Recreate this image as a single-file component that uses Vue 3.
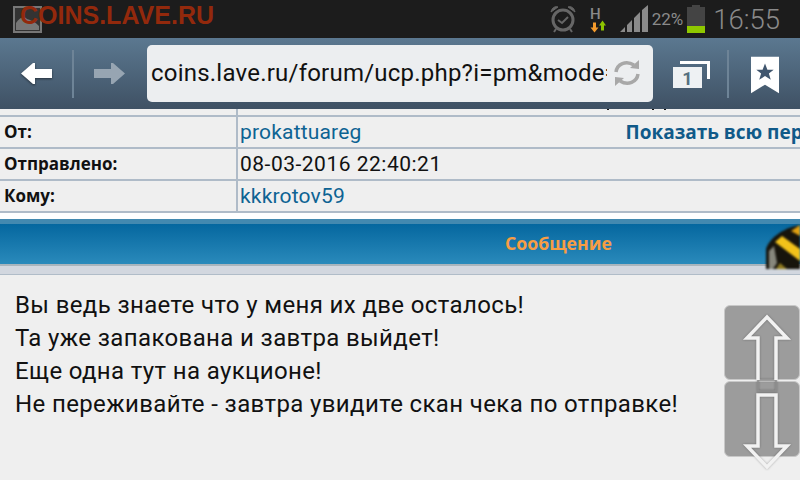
<template>
  <div class="screen">
    <div class="status-bar">
      <svg class="pic-icon" width="29" height="27" viewBox="0 0 29 27">
        <rect x="1" y="1" width="27" height="25" fill="#333" stroke="#777" stroke-width="2" />
        <path d="M3 24V17C7 11 11 10 14 13C18 14 22 16 26 20V24Z" fill="#777" />
      </svg>
      <span class="watermark">COINS.LAVE.RU</span>
      <div class="status-right">
        <svg class="alarm" width="26" height="28" viewBox="0 0 26 28" fill="none" stroke="#666">
          <circle cx="13" cy="15" r="10" stroke-width="3" />
          <path d="M8 15l4 3 6-6" stroke-width="2" />
          <path d="M1 7C2 2 6 1 8 2ZM25 7C24 2 20 1 18 2Z" fill="#666" stroke-width="1" />
          <path d="M6 24l-2 3M20 24l2 3" stroke-width="2" />
        </svg>
        <svg class="net" width="16" height="27" viewBox="0 0 16 27">
          <text x="0" y="12.500" class="net-h">H</text>
          <path d="M3 16.500h3v5h2.500l-4 5-4-5h2.500Z" fill="#f49b2c" />
          <path d="M11 24.500h3v-5h2l-3.500-5-3.500 5h2Z" fill="#8ec400" />
        </svg>
        <svg class="signal" width="29" height="28" viewBox="0 0 29 28" fill="#8a8a8a">
          <path d="M0 27L5 22V27ZM7 20L12 15V27H7ZM14 13L20 7V27H14ZM22 5L28 0V27H22Z" />
        </svg>
        <span class="percent">22%</span>
        <div class="battery">
          <div class="battery-cap"></div>
          <div class="battery-body"><div class="battery-fill"></div></div>
        </div>
        <span class="clock">16:55</span>
      </div>
    </div>

    <div class="toolbar">
      <svg class="nav-back" width="32" height="22" viewBox="0 0 32 22">
        <path d="M0 10.500L12 0H14V6H31V15H14V21H12Z" fill="#fff" />
      </svg>
      <div class="sep"></div>
      <svg class="nav-forward" width="32" height="22" viewBox="0 0 32 22">
        <path d="M31 10.500L19 0H17V6H0V15H17V21H19Z" fill="#97a5b2" />
      </svg>
      <div class="url-box">
        <span class="url-text">coins.lave.ru/forum/ucp.php?i=pm&amp;mode=view</span>
        <svg class="reload" width="28" height="28" viewBox="0 0 28 28" fill="none" stroke="#a8a8a8" stroke-width="3.500">
          <path d="M3 13C4 5 13 1 21 6" />
          <path d="M25 15C24 23 15 27 7 22" />
          <path d="M17 9L26 10L26 1Z" fill="#a8a8a8" stroke="none" />
          <path d="M11 19L2 18L2 27Z" fill="#a8a8a8" stroke="none" />
        </svg>
      </div>
      <div class="tabs">
        <div class="tab-back"></div>
        <div class="tab-front">1</div>
      </div>
      <div class="sep sep-right"></div>
      <svg class="bookmark" width="28" height="38" viewBox="0 0 29 38">
        <path d="M0 0H29V38L14.500 29L0 38Z" fill="#fff" />
        <path d="M14.500 7L17 13.500H23.500L18.500 17.500L20.500 24L14.500 20L8.500 24L10.500 17.500L5.500 13.500H12Z" fill="#40566e" />
      </svg>
    </div>

    <div class="cut-row">
      <div class="cut-cell"></div>
      <div class="cut-value">
        <i class="tick tick-a"></i>
        <i class="tick tick-b"></i>
        <i class="tick tick-c"></i>
      </div>
    </div>
    <div class="info-row" v-for="row in rows" :key="row.label">
      <div class="info-label">{{ row.label }}</div>
      <div class="info-value" :class="{ link: row.link }">
        <span>{{ row.value }}</span>
        <a v-if="row.extra" class="show-all">{{ row.extra }}</a>
      </div>
    </div>

    <div class="white-gap"></div>
    <div class="msg-head">
      <div class="msg-head-top"></div>
      <div class="msg-head-main">
        <span class="msg-title">Сообщение</span>
        <svg class="hazard" width="34" height="44" viewBox="0 0 34 44">
          <defs>
            <clipPath id="hz"><path d="M0 44V24C3 14 16 3 34 0V44Z" /></clipPath>
          </defs>
          <g clip-path="url(#hz)">
            <rect width="34" height="44" fill="#17140c" />
            <path d="M9 17L16 11L34 24V36Z" fill="#f2c21a" />
            <path d="M25 6L34 0V11Z" fill="#e0a010" />
            <path d="M3 26L8 21L11 38L7 44H3Z" fill="#b8b8ac" opacity=".7" />
            <path d="M14 38L21 44H10Z" fill="#8f7a20" />
          </g>
        </svg>
      </div>
    </div>
    <div class="msg-sub"></div>

    <div class="msg-body">
      <p v-for="line in lines" :key="line">{{ line }}</p>
    </div>

    <div class="scroll-btn scroll-up"></div>
    <div class="scroll-btn scroll-down"></div>
    <svg class="scroll-arrows" width="76" height="175" viewBox="0 0 76 175" fill="none">
      <rect x="34" y="75" width="18" height="11" stroke="#8e8e8e" stroke-width="1.500" />
      <g stroke="#f2f2f2" stroke-width="3.500">
        <path d="M34 75V33H23L43 12L63 33H52V75" />
        <path d="M34 90V141H23L43 162L63 141H52V90Z" />
      </g>
    </svg>
  </div>
</template>

<script setup>
const rows = [
  { label: 'От:', value: 'prokattuareg', link: true, extra: 'Показать всю переписку' },
  { label: 'Отправлено:', value: '08-03-2016 22:40:21' },
  { label: 'Кому:', value: 'kkkrotov59', link: true }
]

const lines = [
  'Вы ведь знаете что у меня их две осталось!',
  'Та уже запакована и завтра выйдет!',
  'Еще одна тут на аукционе!',
  'Не переживайте - завтра увидите скан чека по отправке!'
]
</script>

<style>
html, body {
  margin: 0;
  overflow: hidden;
  background: #efefef;
}
</style>

<style scoped>
.screen {
  position: relative;
  width: 800px;
  height: 480px;
  overflow: hidden;
  background: #efefef;
  font-family: Roboto, "Noto Sans", sans-serif;
}

.status-bar {
  position: relative;
  display: flex;
  align-items: center;
  height: 38px;
  background: #1c1c1c;
}

.pic-icon {
  margin-left: 13px;
}

.watermark {
  position: absolute;
  left: 20px;
  top: 1px;
  font-family: "Liberation Sans", sans-serif;
  font-weight: bold;
  font-size: 25px;
  color: #93290c;
  white-space: nowrap;
}

.status-right {
  display: flex;
  align-items: center;
  margin-left: auto;
  height: 38px;
}

.alarm {
  margin-right: 14px;
}

.net {
  margin-right: 14px;
}

.net-h {
  font-family: Roboto, sans-serif;
  font-size: 15px;
  font-weight: 500;
  fill: #8a8a8a;
}

.percent {
  margin-left: 3px;
  font-size: 17px;
  color: #8a8a8a;
}

.battery {
  margin-left: 4px;
  width: 18px;
  height: 28px;
  display: flex;
  flex-direction: column;
  align-items: center;
}

.battery-cap {
  width: 8px;
  height: 2px;
  background: #444;
}

.battery-body {
  width: 18px;
  height: 26px;
  background: #444;
  display: flex;
  align-items: flex-end;
}

.battery-fill {
  width: 100%;
  height: 7px;
  background: #8fc800;
}

.clock {
  margin-left: 8px;
  margin-right: 20px;
  font-size: 27.500px;
  font-weight: 300;
  color: #8a8a8a;
}

.toolbar {
  display: flex;
  align-items: center;
  height: 71px;
  background: linear-gradient(#5b7890, #3f5164);
}

.nav-back {
  margin-left: 21px;
  filter: drop-shadow(0 1px 1px rgba(0, 0, 0, 0.5));
}

.sep {
  width: 2px;
  height: 48px;
  margin-left: 19px;
  background: #6e8497;
}

.nav-forward {
  margin-left: 20px;
}

.url-box {
  display: flex;
  align-items: center;
  width: 506px;
  height: 57px;
  margin-left: 21px;
  margin-top: -1px;
  box-sizing: border-box;
  padding-left: 4px;
  background: #eceef0;
  border-radius: 5px;
  overflow: hidden;
}

.url-text {
  width: 456px;
  flex: none;
  overflow: hidden;
  white-space: nowrap;
  font-size: 24px;
  letter-spacing: 0.22px;
  color: #111;
}

.reload {
  margin-left: 6px;
}

.tabs {
  position: relative;
  width: 37px;
  height: 27px;
  margin-left: 20px;
  margin-top: 1px;
}

.tab-back {
  position: absolute;
  right: 0;
  top: 0;
  width: 27px;
  height: 15px;
  border-top: 3px solid #fff;
  border-right: 3px solid #fff;
}

.tab-front {
  position: absolute;
  left: 0;
  bottom: 0;
  width: 29px;
  height: 21px;
  background: #eef1f3;
  text-align: center;
  font-size: 18px;
  font-weight: 700;
  line-height: 23px;
  color: #55707f;
}

.sep-right {
  margin-left: 17px;
}

.bookmark {
  margin-left: 22px;
  margin-top: 3px;
}

.cut-row {
  display: flex;
  height: 6px;
  border-bottom: 2px solid #afbbc8;
}

.cut-cell {
  width: 236px;
  flex: none;
  border-right: 2px solid #afbbc8;
}

.cut-value {
  display: flex;
  align-items: flex-start;
}

.tick {
  width: 2px;
  height: 1px;
  background: #111;
}

.tick-a {
  margin-left: 369px;
}

.tick-b {
  margin-left: 43px;
}

.tick-c {
  margin-left: 10px;
}

.info-row {
  display: flex;
  height: 30px;
  border-bottom: 2px solid #afbbc8;
}

.info-label {
  width: 232px;
  flex: none;
  padding-left: 4px;
  border-right: 2px solid #afbbc8;
  font-family: "Open Sans", sans-serif;
  font-size: 17px;
  font-weight: 700;
  line-height: 29px;
  color: #111;
}

.info-value {
  flex: 1;
  display: flex;
  padding-left: 2px;
  overflow: hidden;
  white-space: nowrap;
  font-size: 21px;
  letter-spacing: 0.5px;
  line-height: 31px;
  color: #111;
}

.info-value.link {
  letter-spacing: 0.18px;
  color: #0d6393;
}

.show-all {
  margin-left: 264px;
  font-family: "Open Sans", sans-serif;
  font-size: 19px;
  font-weight: 700;
  letter-spacing: 0;
  line-height: 31px;
  color: #105a89;
}

.white-gap {
  height: 6px;
  background: #fff;
}

.msg-head-top {
  height: 5px;
  background: #4389b0;
}

.msg-head-main {
  position: relative;
  height: 40px;
  display: flex;
  justify-content: center;
  align-items: center;
  padding: 0 0 2px 317px;
  box-sizing: border-box;
  background: linear-gradient(#05679f, #2a8abb);
}

.msg-title {
  font-family: "Open Sans", sans-serif;
  font-size: 17.700px;
  font-weight: 700;
  color: #f79d44;
}

.hazard {
  position: absolute;
  right: 0;
  top: 1px;
  z-index: 1;
  filter: blur(0.8px);
}

.msg-sub {
  height: 8px;
  border-top: 2px solid #a9b5bd;
  border-bottom: 1px solid #b0bcc8;
  background: #d2d7df;
}

.msg-body {
  padding: 14px 15px 0;
  font-size: 24px;
  letter-spacing: 0.37px;
  line-height: 33px;
  color: #111;
}

.msg-body p {
  margin: 0;
  white-space: nowrap;
}

.scroll-btn {
  position: absolute;
  left: 724px;
  width: 76px;
  box-sizing: border-box;
  background: #9c9c9c;
  border: 1px solid #c8c8c8;
  border-radius: 6px;
}

.scroll-up {
  top: 305px;
  height: 75px;
}

.scroll-down {
  top: 381px;
  height: 76px;
}

.scroll-arrows {
  position: absolute;
  left: 724px;
  top: 305px;
  filter: drop-shadow(0 0 1px rgba(0, 0, 0, 0.3));
}
</style>
